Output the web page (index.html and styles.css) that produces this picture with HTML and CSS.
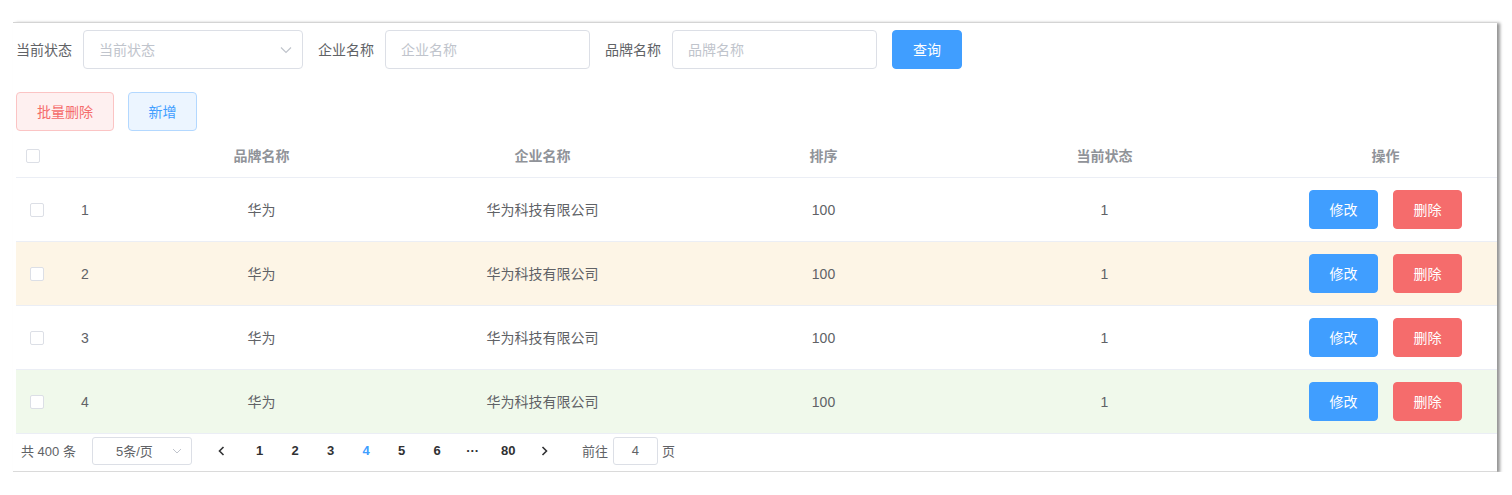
FILE: index.html
```html
<!DOCTYPE html>
<html lang="zh-CN">
<head>
<meta charset="utf-8">
<title>品牌管理</title>
<link rel="stylesheet" href="styles.css">
</head>
<body>
<div class="frame">
  <form class="search">
    <label class="lbl">当前状态</label>
    <div class="field select">
      <span class="ph">当前状态</span>
      <svg class="arrow" width="12" height="8" viewBox="0 0 12 8"><path d="M1 1.5 L6 6.5 L11 1.5" fill="none" stroke="#c0c4cc" stroke-width="1.2"/></svg>
    </div>
    <label class="lbl">企业名称</label>
    <div class="field input"><span class="ph">企业名称</span></div>
    <label class="lbl">品牌名称</label>
    <div class="field input"><span class="ph">品牌名称</span></div>
    <button type="button" class="btn primary query">查询</button>
  </form>

  <div class="toolbar">
    <button type="button" class="btn danger-plain">批量删除</button>
    <button type="button" class="btn primary-plain">新增</button>
  </div>

  <div class="table">
    <div class="tr head">
      <div class="td sel head-sel"><span class="cb"></span></div>
      <div class="td id"></div>
      <div class="td c">品牌名称</div>
      <div class="td c">企业名称</div>
      <div class="td c">排序</div>
      <div class="td c">当前状态</div>
      <div class="td c ops">操作</div>
    </div>
    <div class="tr">
      <div class="td sel"><span class="cb"></span></div>
      <div class="td id">1</div>
      <div class="td c">华为</div>
      <div class="td c">华为科技有限公司</div>
      <div class="td c">100</div>
      <div class="td c">1</div>
      <div class="td c ops"><button type="button" class="btn primary sm">修改</button><button type="button" class="btn danger sm">删除</button></div>
    </div>
    <div class="tr warning">
      <div class="td sel"><span class="cb"></span></div>
      <div class="td id">2</div>
      <div class="td c">华为</div>
      <div class="td c">华为科技有限公司</div>
      <div class="td c">100</div>
      <div class="td c">1</div>
      <div class="td c ops"><button type="button" class="btn primary sm">修改</button><button type="button" class="btn danger sm">删除</button></div>
    </div>
    <div class="tr">
      <div class="td sel"><span class="cb"></span></div>
      <div class="td id">3</div>
      <div class="td c">华为</div>
      <div class="td c">华为科技有限公司</div>
      <div class="td c">100</div>
      <div class="td c">1</div>
      <div class="td c ops"><button type="button" class="btn primary sm">修改</button><button type="button" class="btn danger sm">删除</button></div>
    </div>
    <div class="tr success">
      <div class="td sel"><span class="cb"></span></div>
      <div class="td id">4</div>
      <div class="td c">华为</div>
      <div class="td c">华为科技有限公司</div>
      <div class="td c">100</div>
      <div class="td c">1</div>
      <div class="td c ops"><button type="button" class="btn primary sm">修改</button><button type="button" class="btn danger sm">删除</button></div>
    </div>
  </div>

  <div class="pager">
    <span class="total">共 400 条</span>
    <div class="sizes">
      <span>5条/页</span>
      <svg class="sarrow" width="10" height="6" viewBox="0 0 10 6"><path d="M1 1 L5 5 L9 1" fill="none" stroke="#c0c4cc" stroke-width="1"/></svg>
    </div>
    <span class="nav prev"><svg width="7" height="10" viewBox="0 0 7 10"><path d="M5.5 1 L1.5 5 L5.5 9" fill="none" stroke="#303133" stroke-width="1.6"/></svg></span>
    <ul class="pages">
      <li>1</li><li>2</li><li>3</li><li class="active">4</li><li>5</li><li>6</li><li class="more">···</li><li>80</li>
    </ul>
    <span class="nav next"><svg width="7" height="10" viewBox="0 0 7 10"><path d="M1.5 1 L5.5 5 L1.5 9" fill="none" stroke="#303133" stroke-width="1.6"/></svg></span>
    <span class="jump">前往</span>
    <div class="jumpbox">4</div>
    <span class="jump">页</span>
  </div>
</div>
</body>
</html>
```

FILE: styles.css
```css
* { box-sizing: border-box; }
html, body { margin: 0; padding: 0; background: #fff; }
body {
  font-family: "Liberation Sans", "Noto Sans CJK SC", sans-serif;
  font-size: 14px;
  color: #606266;
}
.frame {
  margin: 22px 0 0 13px;
  width: 1484px;
  height: 450px;
  padding: 7px 0 0 3px;
  background: #fff;
  border-top: 1px solid #d4d4d4;
  border-bottom: 1px solid #dadada;
  box-shadow: 3px 1px 3px rgba(0,0,0,0.42);
}
.search {
  display: flex;
  align-items: center;
  height: 39px;
  margin: 0;
}
.lbl {
  font-size: 14px;
  color: #606266;
  margin-right: 11px;
  line-height: 20px;
}
.field {
  height: 39px;
  border: 1px solid #dcdfe6;
  border-radius: 4px;
  padding-left: 15px;
  display: flex;
  align-items: center;
  margin-right: 15px;
  background: #fff;
}
.ph { color: #c0c4cc; font-size: 14px; line-height: 20px; }
.select { width: 220px; justify-content: space-between; padding-right: 10px; }
.input { width: 205px; }
.btn {
  font-family: inherit;
  font-size: 14px;
  line-height: 1;
  height: 39px;
  padding: 0 20px;
  border-radius: 4px;
  border: 1px solid transparent;
  cursor: pointer;
}
.primary { background: #409eff; border-color: #409eff; color: #fff; }
.danger { background: #f56c6c; border-color: #f56c6c; color: #fff; }
.query { width: 70px; padding: 0; }
.toolbar {
  display: flex;
  gap: 14px;
  margin-top: 23px;
}
.danger-plain { background: #fef0f0; border-color: #fbc4c4; color: #f56c6c; width: 98px; padding: 0; }
.primary-plain { background: #ecf5ff; border-color: #b3d8ff; color: #409eff; width: 69px; padding: 0; }

.table { margin-top: 4px; width: 1481px; }
.tr {
  display: grid;
  grid-template-columns: 55px 50px 281px 281px 281px 281px 252px;
  height: 64px;
  border-bottom: 1px solid #ebeef5;
  align-items: center;
}
.tr.head { height: 43px; color: #909399; font-weight: bold; }
.tr.warning { background: #fdf5e6; }
.tr.success { background: #f0f9eb; }
.td { line-height: 20px; }
.td.c { text-align: center; }
.td.id { padding-left: 10px; }
.td.sel { padding-left: 14px; display: flex; align-items: center; }
.td.head-sel { padding-left: 10px; }
.cb {
  display: inline-block;
  width: 14px;
  height: 14px;
  border: 1px solid #dcdfe6;
  border-radius: 2px;
  background: #fff;
}
.ops { display: flex; justify-content: center; gap: 15px; padding-left: 29px; }
.btn.sm { width: 69px; padding: 0; }

.pager {
  display: flex;
  align-items: center;
  height: 33px;
  padding-left: 5px;
  font-size: 13px;
  color: #606266;
}
.total { margin-right: 16px; }
.sizes {
  width: 100px;
  height: 28px;
  border: 1px solid #dcdfe6;
  border-radius: 3px;
  display: flex;
  align-items: center;
  justify-content: space-between;
  padding: 0 9px 0 23px;
}
.nav { width: 30px; display: flex; justify-content: center; align-items: center; height: 28px; }
.prev { margin-left: 15px; margin-right: 5px; }
.next { margin-left: 4px; }
.pages { list-style: none; margin: 0; padding: 0; display: flex; }
.pages li {
  width: 35.5px;
  text-align: center;
  font-weight: bold;
  color: #303133;
  line-height: 28px;
}
.pages li.active { color: #409eff; }
.jump { margin-left: 22px; }
.jump + .jumpbox { margin-left: 5px; }
.jumpbox {
  width: 45px;
  height: 28px;
  border: 1px solid #dcdfe6;
  border-radius: 3px;
  text-align: center;
  line-height: 26px;
  margin-right: 4px;
}
.jumpbox + .jump { margin-left: 0; }
```
